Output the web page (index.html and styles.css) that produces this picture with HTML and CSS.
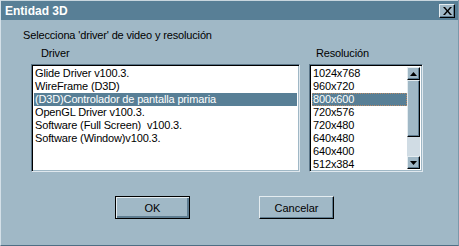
FILE: index.html
```html
<!DOCTYPE html>
<html lang="es">
<head>
  <meta charset="UTF-8" />
  <title>Entidad 3D</title>
  <link rel="stylesheet" href="styles.css">
</head>
<body>
  <div class="window">
    <div class="titlebar">
      <span class="title">Entidad 3D</span>
      <button class="close" type="button">
        <svg width="9" height="8" viewBox="0 0 9 8">
          <path d="M0 0h2l2.5 3 2.5-3h2l-3.5 4 3.5 4h-2l-2.5-3-2.5 3h-2l3.5-4z" fill="#000"/>
        </svg>
      </button>
    </div>

    <div class="content">
      <p class="prompt">Selecciona 'driver' de video y resolución</p>

      <div class="lists">
        <div class="col col-driver">
          <div class="label">Driver</div>
          <ul class="listbox driver-list">
            <li>Glide Driver v100.3.</li>
            <li>WireFrame (D3D)</li>
            <li class="selected">(D3D)Controlador de pantalla primaria</li>
            <li>OpenGL Driver v100.3.</li>
            <li>Software (Full Screen)&nbsp; v100.3.</li>
            <li>Software (Window)v100.3.</li>
          </ul>
        </div>

        <div class="col col-res">
          <div class="label">Resolución</div>
          <div class="listbox res-box">
            <ul class="res-list">
              <li>1024x768</li>
              <li>960x720</li>
              <li class="selected focus">800x600</li>
              <li>720x576</li>
              <li>720x480</li>
              <li>640x480</li>
              <li>640x400</li>
              <li>512x384</li>
            </ul>
            <div class="scrollbar">
              <div class="arrow">
                <svg width="7" height="4" viewBox="0 0 7 4"><path d="M3.5 0L7 4H0z" fill="#000"/></svg>
              </div>
              <div class="thumb"></div>
              <div class="track"></div>
              <div class="arrow">
                <svg width="7" height="4" viewBox="0 0 7 4"><path d="M0 0h7L3.5 4z" fill="#000"/></svg>
              </div>
            </div>
          </div>
        </div>
      </div>

      <div class="buttons">
        <button class="btn default" type="button">OK</button>
        <button class="btn" type="button">Cancelar</button>
      </div>
    </div>
  </div>
</body>
</html>
```

FILE: styles.css
```css
body {
  margin: 0;
  font-family: "Liberation Sans", Arial, sans-serif;
  font-size: 11px;
  letter-spacing: -0.15px;
  color: #000;
  background: #a0b8c6;
}
.window {
  width: 459px;
  height: 246px;
  box-sizing: border-box;
  background: #a0b8c6;
  border-left: 1px solid #d4e0e8;
  border-bottom: 1px solid #4e6e84;
  border-right: 1px solid #7c98aa;
  display: flex;
  flex-direction: column;
}
.titlebar {
  height: 20px;
  box-sizing: border-box;
  background: #587f96;
  border-top: 1px solid #c8d6de;
  display: flex;
  align-items: center;
  justify-content: space-between;
  padding: 0 3px 0 4px;
}
.title {
  color: #fff;
  font-weight: bold;
  font-size: 12px;
  letter-spacing: 0;
}
.close {
  width: 16px;
  height: 14px;
  padding: 0;
  margin: 0;
  background: #a0b8c6;
  border: 1px solid;
  border-color: #e4ecf0 #000 #000 #e4ecf0;
  box-shadow: inset -1px -1px 0 #5e7c90;
  display: flex;
  align-items: center;
  justify-content: center;
}
.content {
  padding: 9px 0 0 22px;
}
.prompt {
  margin: 0;
  line-height: 13px;
}
.lists {
  display: flex;
  gap: 9px;
  margin-top: 5px;
}
.col-driver {
  margin-left: 8px;
}
.label {
  line-height: 13px;
  margin-bottom: 4px;
}
.col-driver .label {
  padding-left: 10px;
}
.col-res .label {
  padding-left: 7px;
}
.listbox {
  margin: 0;
  padding: 0;
  list-style: none;
  background: #fff;
  border: 1px solid;
  border-color: #5a7588 #e0e8ee #e0e8ee #5a7588;
  box-shadow: inset 1px 1px 0 #000, inset -1px -1px 0 #a0b8c6;
  box-sizing: border-box;
  height: 108px;
}
.driver-list {
  width: 269px;
  padding: 2px 2px 0 2px;
}
.listbox li,
.res-list li {
  line-height: 13px;
  height: 13px;
  padding-left: 1px;
  white-space: nowrap;
}
.selected {
  background: #587f96;
  color: #fff;
}
.focus {
  outline: 1px dotted #b98a66;
  outline-offset: -1px;
}
.res-box {
  width: 114px;
  display: flex;
  padding: 2px;
}
.res-list {
  flex: 1;
  margin: 0;
  padding: 0;
  list-style: none;
}
.scrollbar {
  width: 13px;
  display: flex;
  flex-direction: column;
  background: #d0dce4;
}
.arrow {
  height: 13px;
  box-sizing: border-box;
  background: #a0b8c6;
  border: 1px solid;
  border-color: #e4ecf0 #000 #000 #e4ecf0;
  box-shadow: inset -1px -1px 0 #5e7c90;
  display: flex;
  align-items: center;
  justify-content: center;
}
.thumb {
  height: 57px;
  box-sizing: border-box;
  background: #a0b8c6;
  border: 1px solid;
  border-color: #e4ecf0 #000 #000 #e4ecf0;
  box-shadow: inset -1px -1px 0 #5e7c90;
}
.track {
  flex: 1;
}
.buttons {
  display: flex;
  gap: 69px;
  margin: 24px 0 0 92px;
}
.btn {
  width: 75px;
  height: 23px;
  padding: 0;
  font-family: "Liberation Sans", Arial, sans-serif;
  font-size: 11px;
  color: #000;
  background: #a0b8c6;
  border: 1px solid;
  border-color: #e4ecf0 #000 #000 #e4ecf0;
  box-shadow: inset -1px -1px 0 #5e7c90;
}
.btn.default {
  border: 1px solid #000;
  box-shadow: inset 1px 1px 0 #e4ecf0, inset -2px -2px 0 #5e7c90;
}
```
